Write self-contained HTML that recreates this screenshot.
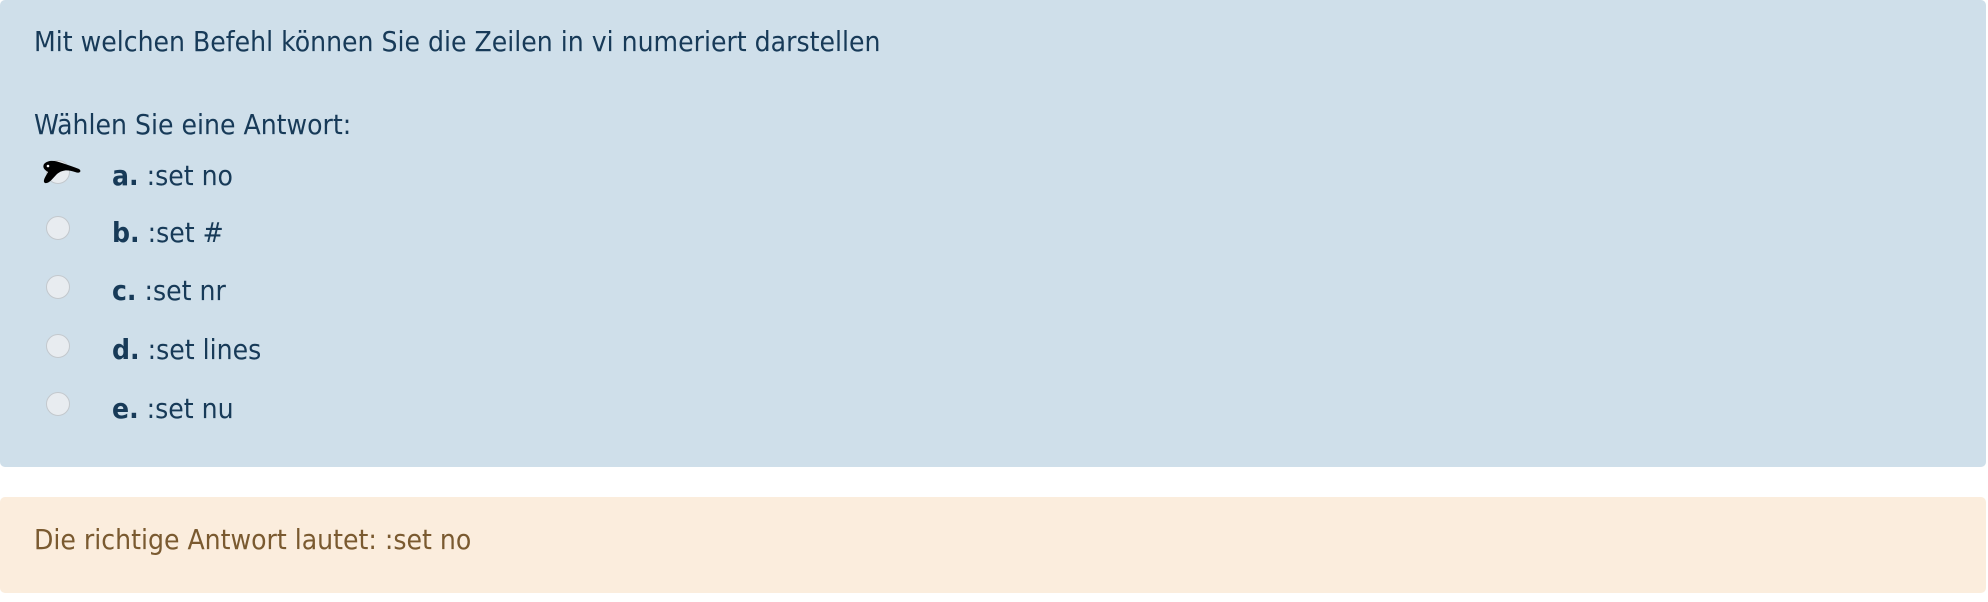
<!DOCTYPE html>
<html><head><meta charset="utf-8"><style>
body{margin:0;width:1988px;height:602px;background:#fff;font-family:"DejaVu Sans Condensed","DejaVu Sans","Liberation Sans",sans-serif;font-stretch:condensed;overflow:hidden}
.q{position:absolute;left:0;top:0;width:1986px;height:467px;background:#cfdfea;border-radius:5px;color:#173a58}
.t{position:absolute;left:34px;font-size:28px;white-space:nowrap;line-height:30px}
.r{position:absolute;left:46px;width:24px;height:24px;border-radius:50%;background:#e8ecf0;border:1.5px solid #c3c8cd;box-sizing:border-box}
.l{position:absolute;left:112px;font-size:28px;line-height:30px;white-space:nowrap}
.l b{font-weight:bold}
.f{position:absolute;left:0;top:497px;width:1986px;height:96px;background:#fbeddd;border-radius:5px;color:#7a5a30}
</style></head><body>
<div class="q">
<div class="t" style="top:27px">Mit welchen Befehl können Sie die Zeilen in vi numeriert darstellen</div>
<div class="t" style="top:110px">Wählen Sie eine Antwort:</div>
<div class="r" style="top:160px"></div>
<svg style="position:absolute;left:40px;top:158px" width="44" height="34" viewBox="0 0 44 34"><path d="M4 6 C9 1 16 3 22 5 C28 7 34 9 39 11 C42 13 40 16 35 14 C29 12 23 11 17 16 C13 20 9 26 5 25 C2 23 6 18 8 14 C5 12 2 10 4 6Z" fill="#000"/><circle cx="8" cy="8" r="1.3" fill="#fff"/></svg>
<div class="l" style="top:161px"><b>a.</b> :set no</div>
<div class="r" style="top:216px"></div>
<div class="l" style="top:218px"><b>b.</b> :set #</div>
<div class="r" style="top:275px"></div>
<div class="l" style="top:276px"><b>c.</b> :set nr</div>
<div class="r" style="top:334px"></div>
<div class="l" style="top:335px"><b>d.</b> :set lines</div>
<div class="r" style="top:392px"></div>
<div class="l" style="top:394px"><b>e.</b> :set nu</div>
</div>
<div class="f"><div class="t" style="top:28px">Die richtige Antwort lautet: :set no</div></div>
</body></html>
